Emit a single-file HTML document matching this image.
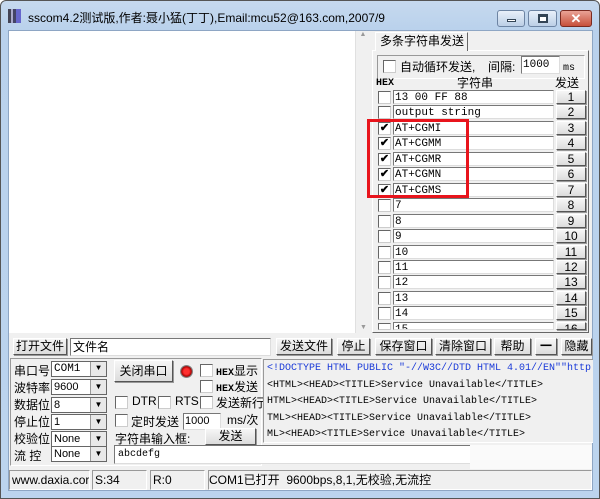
<!DOCTYPE html>
<html><head><meta charset="utf-8"><style>
*{box-sizing:border-box;margin:0;padding:0}
body{width:600px;height:499px;overflow:hidden;background:#fff;font-family:"Liberation Sans","Noto Sans CJK SC",sans-serif;font-size:12px;color:#000;position:relative;white-space:nowrap}
.a{position:absolute}
.frame{left:0;top:0;width:600px;height:499px;background:linear-gradient(#c6d9ee,#b9d1ec 30px,#bcd4ee);border:1px solid #555;border-radius:6px 6px 0 0}
.client{left:8px;top:30px;width:585px;height:461px;background:#f0f0f0;border:1px solid #8ea6c4}
.btn{position:absolute;background:linear-gradient(#f6f6f6,#dcdcdc);border:1px solid #fff;border-right-color:#555;border-bottom-color:#555;box-shadow:1px 1px 0 #999;text-align:center;font-size:12px;line-height:15px}
.inp{position:absolute;background:#fff;border:1px solid #777;border-right-color:#ddd;border-bottom-color:#ddd}
.cb{position:absolute;width:13px;height:13px;background:#fff;border:1px solid #666;border-right-color:#ccc;border-bottom-color:#ccc}
.mono{font-family:"Liberation Mono",monospace;font-size:11px}
.cbt{font-size:11px;line-height:11px;text-align:center;font-weight:bold}
.sel{position:absolute;background:#fff;border:1px solid #666;height:16px;font-family:"Liberation Mono",monospace;font-size:11px;line-height:14px;padding-left:2px}
.sel:after{content:"▼";position:absolute;right:0;top:0;width:15px;height:14px;background:#e8e8e8;border-left:1px solid #999;font-size:8px;text-align:center;line-height:14px}
.lbl{position:absolute;font-size:12px}
.st{position:absolute;top:470px;height:20px;border:1px solid #999;border-right-color:#fff;border-bottom-color:#fff;font-size:12px;line-height:18px;padding-left:2px}
</style></head><body>
<div class="a frame"></div>
<div class="a" style="left:8px;top:9px;width:13px;height:14px;background:linear-gradient(90deg,#445 0 3px,#aac 3px 5px,#446 5px 8px,#66c 8px 13px)"></div>
<div class="a" style="left:28px;top:9px;font-size:12px">sscom4.2测试版,作者:聂小猛(丁丁),Email:mcu52@163.com,2007/9</div>
<div class="a" style="left:497px;top:10px;width:28px;height:17px;border:1px solid #6d84a3;border-radius:3px;background:linear-gradient(#e8f0fa,#bccfe6)"><div class="a" style="left:9px;top:8px;width:9px;height:3px;background:#fff;border:1px solid #345"></div></div>
<div class="a" style="left:528px;top:10px;width:29px;height:17px;border:1px solid #6d84a3;border-radius:3px;background:linear-gradient(#e8f0fa,#bccfe6)"><div class="a" style="left:9px;top:3px;width:10px;height:9px;border:2px solid #345;border-top-width:3px;background:#fff"></div></div>
<div class="a" style="left:560px;top:10px;width:32px;height:17px;border:1px solid #7a2a20;border-radius:3px;background:linear-gradient(#e9a396,#c7503b);color:#fff;font-weight:bold;text-align:center;font-size:13px;line-height:15px">✕</div>
<div class="a client"></div>
<div class="a" style="left:9px;top:31px;width:346px;height:302px;background:#fff"></div>
<div class="a" style="left:355px;top:31px;width:15px;height:302px;background:#f0f0f0;border-left:1px solid #e0e0e0;color:#999;font-size:7px;text-align:center">▲<div style="position:absolute;bottom:2px;width:15px">▼</div></div>
<div class="a" style="left:372px;top:50px;width:217px;height:283px;border:1px solid #fff;border-right-color:#666;border-bottom-color:#666;background:#f0f0f0"></div>
<div class="a" style="left:375px;top:32px;width:93px;height:19px;border:1px solid #fff;border-right-color:#666;border-bottom:none;background:#f0f0f0;font-size:12px;line-height:17px;padding-left:4px">多条字符串发送</div>
<div class="a" style="left:377px;top:55px;width:208px;height:24px;border:1px solid #999;border-right-color:#fff;border-bottom-color:#fff"></div>
<div class="cb" style="left:383px;top:60px"></div>
<div class="lbl" style="left:400px;top:58px">自动循环发送,</div>
<div class="lbl" style="left:488px;top:58px">间隔:</div>
<div class="inp mono" style="left:521px;top:56px;width:39px;height:18px;line-height:16px;padding-left:1px">1000</div>
<div class="a mono" style="left:563px;top:63px;font-size:10px">ms</div>
<div class="a mono" style="left:376px;top:78px;font-size:10px;font-weight:bold">HEX</div>
<div class="lbl" style="left:457px;top:74px">字符串</div>
<div class="lbl" style="left:555px;top:74px">发送</div>
<div id="rows"></div>
<div class="a" style="left:367px;top:119px;width:102px;height:79px;border:3px solid #e8141c"></div>
<div class="btn" style="left:13px;top:338px;width:54px;height:17px">打开文件</div>
<div class="inp" style="left:70px;top:338px;width:201px;height:18px;font-size:12px;line-height:16px;padding-left:2px">文件名</div>
<div class="btn" style="left:276px;top:338px;width:56px;height:17px">发送文件</div>
<div class="btn" style="left:337px;top:338px;width:33px;height:17px">停止</div>
<div class="btn" style="left:375px;top:338px;width:57px;height:17px">保存窗口</div>
<div class="btn" style="left:435px;top:338px;width:56px;height:17px">清除窗口</div>
<div class="btn" style="left:494px;top:338px;width:37px;height:17px">帮助</div>
<div class="btn" style="left:535px;top:338px;width:22px;height:17px;font-weight:bold">一</div>
<div class="btn" style="left:561px;top:338px;width:31px;height:17px">隐藏</div>
<div class="a" style="left:10px;top:358px;width:252px;height:108px;border:1px solid #999;border-right-color:#fff;border-bottom-color:#fff"></div>
<div class="lbl" style="left:14px;top:362px">串口号</div><div class="sel" style="left:51px;top:361px;width:56px">COM1</div>
<div class="lbl" style="left:14px;top:379px">波特率</div><div class="sel" style="left:51px;top:379px;width:56px;font-family:'Liberation Sans';font-size:11px">9600</div>
<div class="lbl" style="left:14px;top:396px">数据位</div><div class="sel" style="left:51px;top:397px;width:56px;font-family:'Liberation Sans';font-size:11px">8</div>
<div class="lbl" style="left:14px;top:413px">停止位</div><div class="sel" style="left:51px;top:414px;width:56px;font-family:'Liberation Sans';font-size:11px">1</div>
<div class="lbl" style="left:14px;top:430px">校验位</div><div class="sel" style="left:51px;top:431px;width:56px;font-family:'Liberation Sans';font-size:11px">None</div>
<div class="lbl" style="left:14px;top:447px">流 控</div><div class="sel" style="left:51px;top:446px;width:56px;font-family:'Liberation Sans';font-size:11px">None</div>
<div class="btn" style="left:114px;top:360px;width:59px;height:22px;line-height:20px;font-size:12px">关闭串口</div>
<div class="a" style="left:180px;top:365px;width:13px;height:13px;border-radius:50%;background:radial-gradient(#ff3030 30%,#a00 55%,#777 60%,#ccc)"></div>
<div class="cb" style="left:200px;top:364px"></div><div class="a" style="left:216px;top:362px;font-size:12px"><span class="mono" style="font-size:10px;font-weight:bold">HEX</span>显示</div>
<div class="cb" style="left:200px;top:380px"></div><div class="a" style="left:216px;top:378px;font-size:12px"><span class="mono" style="font-size:10px;font-weight:bold">HEX</span>发送</div>
<div class="cb" style="left:115px;top:396px"></div><div class="a" style="left:132px;top:394px;font-size:12px">DTR</div>
<div class="cb" style="left:158px;top:396px"></div><div class="a" style="left:175px;top:394px;font-size:12px">RTS</div>
<div class="cb" style="left:200px;top:396px"></div><div class="lbl" style="left:216px;top:394px">发送新行</div>
<div class="cb" style="left:115px;top:414px"></div><div class="lbl" style="left:131px;top:413px">定时发送</div>
<div class="inp" style="left:183px;top:413px;width:38px;height:17px;font-size:11px;line-height:15px;padding-left:1px">1000</div>
<div class="a" style="left:227px;top:411px;font-size:12px">ms/次</div>
<div class="lbl" style="left:115px;top:430px">字符串输入框:</div>
<div class="btn" style="left:205px;top:428px;width:51px;height:17px;font-size:12px">发送</div>
<div class="inp mono" style="left:114px;top:445px;width:478px;height:19px;font-size:10px;line-height:17px;padding-left:3px">abcdefg</div>
<div class="a mono" style="left:263px;top:359px;width:330px;height:84px;background:#f0f0f0;border:1px solid #999;border-right:none;border-bottom-color:#fff;overflow:hidden;line-height:16.6px;padding:1px 0 0 3px;font-size:10px">
<div style="color:#1a3ad8">&lt;!DOCTYPE HTML PUBLIC "-//W3C//DTD HTML 4.01//EN""http://</div>
<div>&lt;HTML&gt;&lt;HEAD&gt;&lt;TITLE&gt;Service Unavailable&lt;/TITLE&gt;</div>
<div>HTML&gt;&lt;HEAD&gt;&lt;TITLE&gt;Service Unavailable&lt;/TITLE&gt;</div>
<div>TML&gt;&lt;HEAD&gt;&lt;TITLE&gt;Service Unavailable&lt;/TITLE&gt;</div>
<div>ML&gt;&lt;HEAD&gt;&lt;TITLE&gt;Service Unavailable&lt;/TITLE&gt;</div>
</div>
<div class="a" style="left:470px;top:445px;width:122px;height:24px;background:#fafafa"></div>
<div class="st" style="left:9px;width:81px;overflow:hidden">www.daxia.cor</div>
<div class="st" style="left:92px;width:55px">S:34</div>
<div class="st" style="left:150px;width:55px">R:0</div>
<div class="st" style="left:208px;width:384px;padding-left:0">COM1已打开&nbsp; 9600bps,8,1,无校验,无流控</div>
<script>
var t=["13 00 FF 88","output string","AT+CGMI","AT+CGMM","AT+CGMR","AT+CGMN","AT+CGMS","7","8","9","10","11","12","13","14","15"];
var h="";
for(var i=0;i<16;i++){var y=90+i*15.45;var hh=i==15?8:14;
h+='<div class="cb cbt" style="left:378px;top:'+(y+1)+'px;height:'+(i==15?7:13)+'px">'+(i>=2&&i<=6?'✔':'')+'</div>';
h+='<div class="inp mono" style="left:393px;top:'+y+'px;width:161px;height:'+hh+'px;line-height:14px;padding-left:1px;overflow:hidden">'+t[i]+'</div>';
h+='<div class="btn" style="left:556px;top:'+y+'px;width:30px;height:'+hh+'px;line-height:13px;overflow:hidden;font-size:12px">'+(i+1)+'</div>';}
document.getElementById("rows").outerHTML=h;
</script>
</body></html>
